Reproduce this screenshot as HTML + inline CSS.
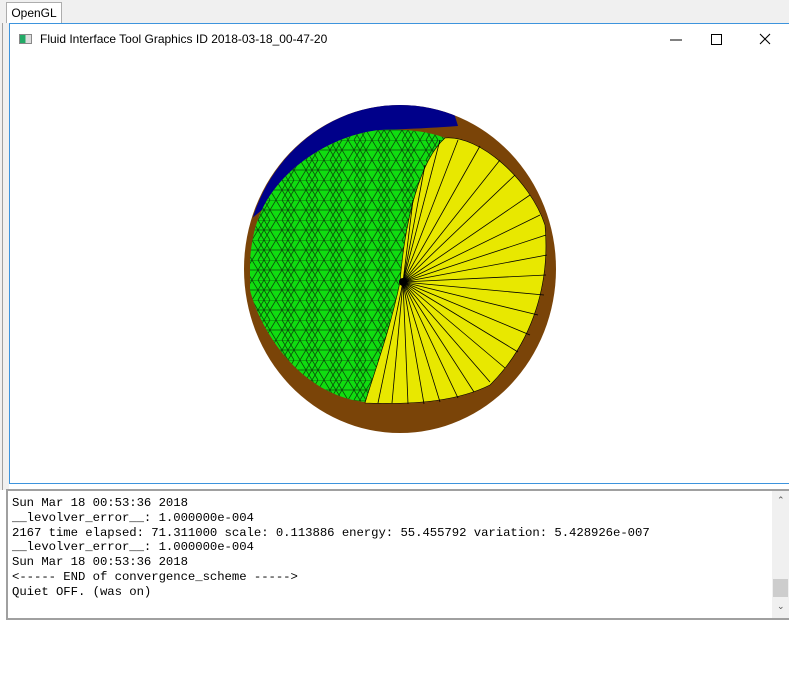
<!DOCTYPE html>
<html><head><style>
body{margin:0;width:789px;height:686px;background:#fff;position:relative;overflow:hidden;font-family:"Liberation Sans",sans-serif}
.top{position:absolute;left:0;top:0;width:789px;height:24px;background:#f0f0f0}
.tab{position:absolute;left:6px;top:2px;width:56px;height:22px;background:#fff;border:1px solid #adadad;border-bottom:none;box-sizing:border-box;font-size:12px;line-height:20px;text-align:center;color:#000}
.lside{position:absolute;left:0;top:23px;width:9px;height:467px;background:#f0f0f0}
.lside::after{content:"";position:absolute;left:2px;top:0;width:1px;height:100%;background:#a0a0a0}
.win{position:absolute;left:9px;top:23px;width:780px;height:461px;border:1px solid #3d94dd;border-right:none;box-sizing:border-box;background:#fff}
.title{position:absolute;left:40px;top:32px;font-size:12px;color:#000}
.ico{position:absolute;left:19px;top:34px;width:13px;height:10px;border:1px solid #888;box-sizing:border-box;background:linear-gradient(90deg,#2a6 0,#2a6 50%,#ddd 50%)}
.con{position:absolute;left:6px;top:489px;width:783px;height:131px;border:2px solid #a0a0a0;border-right:none;box-sizing:border-box;background:#fff}
.con pre{margin:0;position:absolute;left:4px;top:5px;font-family:"Liberation Mono",monospace;font-size:12.3px;line-height:14.8px;color:#000;letter-spacing:-0.05px}
.sb{position:absolute;right:0;top:0;width:17px;height:127px;background:#f0f0f0}
</style></head><body>
<div class="top"><div class="tab">OpenGL</div></div>
<div class="lside"></div>
<div class="win"></div>
<div class="ico"></div>
<div class="title">Fluid Interface Tool Graphics ID 2018-03-18_00-47-20</div>
<svg style="position:absolute;left:660px;top:30px" width="120" height="20">
<line x1="10" y1="10" x2="22" y2="10" stroke="#000" stroke-width="1"/>
<rect x="51.5" y="4.5" width="10" height="10" fill="none" stroke="#000"/>
<path d="M100 4L110 14M110 4L100 14" stroke="#000" stroke-width="1.1"/>
</svg>
<svg style="position:absolute;left:0;top:0" width="789" height="486">
<defs>
<pattern id="mesh" width="24" height="20" patternUnits="userSpaceOnUse">
<path d="M0 0H24M0 10H24M0 0L12 20M12 0L0 20M12 0L24 20M24 0L12 20M0 10L6 0M0 10L6 20M24 10L18 0M24 10L18 20" stroke="#0a4a0a" stroke-width="0.8" fill="none"/>
</pattern>
<clipPath id="cl"><ellipse cx="400" cy="269" rx="155" ry="164"/></clipPath>
</defs>
<ellipse cx="400" cy="269" rx="156" ry="164" fill="#7a4408"/>
<g clip-path="url(#cl)">
<path d="M240 228 L262 210 C280 170 330 135 380 130 C410 129 430 128 458 126 L450 100 L240 100Z" fill="#00008a"/>
<path d="M250 260 C252 235 257 220 262 210 C280 170 330 135 380 130 C410 129 430 132 445 138 C420 160 405 220 400 282 C390 330 375 370 365 402 C300 395 260 330 250 290Z" fill="#10dd10"/>
<path d="M250 260 C252 235 257 220 262 210 C280 170 330 135 380 130 C410 129 430 132 445 138 C420 160 405 220 400 282 C390 330 375 370 365 402 C300 395 260 330 250 290Z" fill="url(#mesh)"/>
<path d="M445 138 C480 135 530 180 545 225 C550 280 535 340 490 385 C460 400 420 405 365 403 C375 370 390 330 400 282 C405 220 420 160 445 138Z" fill="#e8e800" stroke="#000" stroke-width="0.6"/>
<g stroke="#000" stroke-width="0.8" id="fan"></g>
<circle cx="403" cy="282" r="4" fill="#000"/>
</g>
</svg>
<script>
var g=document.getElementById('fan'),cx=403,cy=282,s='';
var pts=[[458,140],[480,146],[500,160],[515,175],[530,195],[540,215],[546,235],[547,255],[546,275],[544,295],[538,315],[530,335],[518,352],[505,368],[490,382],[474,392],[458,398],[440,402],[424,404],[408,404],[392,403],[378,403],[440,140],[425,165],[413,200]];
pts.forEach(function(p){s+='<line x1="'+cx+'" y1="'+cy+'" x2="'+p[0]+'" y2="'+p[1]+'"/>'});
g.innerHTML=s;
</script>
<div class="con"><pre>Sun Mar 18 00:53:36 2018
__levolver_error__: 1.000000e-004
2167 time elapsed: 71.311000 scale: 0.113886 energy: 55.455792 variation: 5.428926e-007
__levolver_error__: 1.000000e-004
Sun Mar 18 00:53:36 2018
&lt;----- END of convergence_scheme -----&gt;
Quiet OFF. (was on)</pre>
<div class="sb"><div style="position:absolute;left:5px;top:4px;font-size:9px;color:#555">&#8963;</div><div style="position:absolute;left:1px;top:88px;width:15px;height:18px;background:#cdcdcd"></div><div style="position:absolute;left:5px;top:110px;font-size:9px;color:#555">&#8964;</div></div>
</div>
</body></html>
